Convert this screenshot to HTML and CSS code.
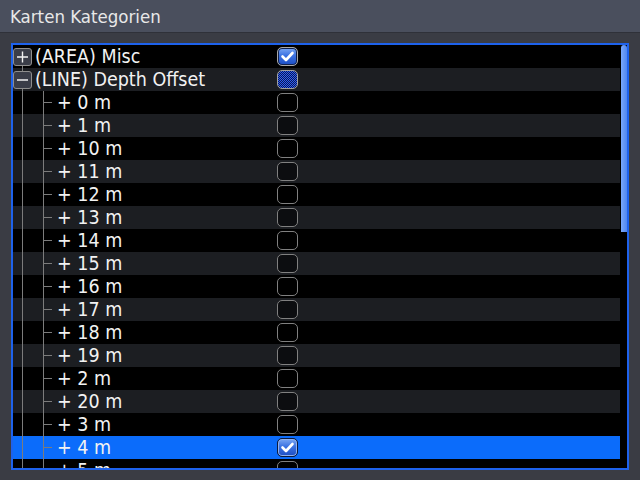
FILE: index.html
```html
<!DOCTYPE html>
<html lang="de">
<head>
    <meta charset="UTF-8">
    <title>Karten Kategorien</title>
    <link rel="stylesheet" href="styles.css">
</head>
<body>
    <div class="titlebar">Karten Kategorien</div>

    <div class="content">
        <div class="panel">
            <div class="list">
                <div class="row">
                    <div class="item">
                        <span class="tree tree-first">
                            <span class="expander">
                                <svg width="19" height="18" viewBox="0 0 19 18"><path d="M4 9h11M9.5 3.5v11" stroke="#f2f2f2" stroke-width="1.4" fill="none"/></svg>
                            </span>
                        </span>
                        <span class="name">(AREA) Misc</span>
                    </div>
                    <span class="check checked">
                        <svg width="19" height="17" viewBox="0 0 19 17"><path d="M4.5 8.5l3.5 3.5 6.5-7" stroke="#fff" stroke-width="2.6" fill="none" stroke-linecap="round" stroke-linejoin="round"/></svg>
                    </span>
                </div>
                <div class="row">
                    <div class="item">
                        <span class="tree tree-top">
                            <span class="expander">
                                <svg width="19" height="18" viewBox="0 0 19 18"><path d="M4 9h11" stroke="#f2f2f2" stroke-width="1.4" fill="none"/></svg>
                            </span>
                        </span>
                        <span class="name">(LINE) Depth Offset</span>
                    </div>
                    <span class="check partial"></span>
                </div>
                <div class="row"><div class="item"><span class="tree tree-child"></span><span class="name">+ 0 m</span></div><span class="check"></span></div>
                <div class="row"><div class="item"><span class="tree tree-child"></span><span class="name">+ 1 m</span></div><span class="check"></span></div>
                <div class="row"><div class="item"><span class="tree tree-child"></span><span class="name">+ 10 m</span></div><span class="check"></span></div>
                <div class="row"><div class="item"><span class="tree tree-child"></span><span class="name">+ 11 m</span></div><span class="check"></span></div>
                <div class="row"><div class="item"><span class="tree tree-child"></span><span class="name">+ 12 m</span></div><span class="check"></span></div>
                <div class="row"><div class="item"><span class="tree tree-child"></span><span class="name">+ 13 m</span></div><span class="check"></span></div>
                <div class="row"><div class="item"><span class="tree tree-child"></span><span class="name">+ 14 m</span></div><span class="check"></span></div>
                <div class="row"><div class="item"><span class="tree tree-child"></span><span class="name">+ 15 m</span></div><span class="check"></span></div>
                <div class="row"><div class="item"><span class="tree tree-child"></span><span class="name">+ 16 m</span></div><span class="check"></span></div>
                <div class="row"><div class="item"><span class="tree tree-child"></span><span class="name">+ 17 m</span></div><span class="check"></span></div>
                <div class="row"><div class="item"><span class="tree tree-child"></span><span class="name">+ 18 m</span></div><span class="check"></span></div>
                <div class="row"><div class="item"><span class="tree tree-child"></span><span class="name">+ 19 m</span></div><span class="check"></span></div>
                <div class="row"><div class="item"><span class="tree tree-child"></span><span class="name">+ 2 m</span></div><span class="check"></span></div>
                <div class="row"><div class="item"><span class="tree tree-child"></span><span class="name">+ 20 m</span></div><span class="check"></span></div>
                <div class="row"><div class="item"><span class="tree tree-child"></span><span class="name">+ 3 m</span></div><span class="check"></span></div>
                <div class="row selected">
                    <div class="item"><span class="tree tree-child"></span><span class="name">+ 4 m</span></div>
                    <span class="check checked">
                        <svg width="19" height="17" viewBox="0 0 19 17"><path d="M4.5 8.5l3.5 3.5 6.5-7" stroke="#fff" stroke-width="2.6" fill="none" stroke-linecap="round" stroke-linejoin="round"/></svg>
                    </span>
                </div>
                <div class="row"><div class="item"><span class="tree tree-child"></span><span class="name">+ 5 m</span></div><span class="check"></span></div>
            </div>
            <div class="scrollbar">
                <div class="thumb"></div>
            </div>
        </div>
    </div>
</body>
</html>
```

FILE: styles.css
```css
:root {
    --title-bg: #4a4f5d;
    --page-bg: #3a3c44;
    --border-blue: #1e62ec;
    --select-blue: #0b6cfb;
    --stripe: #1c1e22;
    --text-color: #f2f2f2;
    --line-color: #7c7c7c;
}

body {
    margin: 0;
    background-color: var(--page-bg);
    font-family: 'DejaVu Sans Condensed', 'DejaVu Sans', sans-serif;
    color: var(--text-color);
    width: 640px;
    height: 480px;
    overflow: hidden;
}

.titlebar {
    height: 32px;
    line-height: 33px;
    padding-left: 10px;
    font-size: 18.5px;
    color: #e8e8e8;
    background-color: var(--title-bg);
    border-bottom: 1px solid #2f3139;
}

.content {
    padding: 10px 11px 0 11px;
}

.panel {
    display: flex;
    height: 423px;
    border: 2px solid var(--border-blue);
    background-color: #000;
    overflow: hidden;
}

.list {
    flex: 1;
    overflow: hidden;
}

.row {
    display: grid;
    grid-template-columns: 264px 21px;
    align-items: center;
    height: 23px;
}

.row:nth-child(even) {
    background-color: var(--stripe);
}

.row.selected {
    background-color: var(--select-blue);
}

.item {
    display: flex;
    align-items: center;
    height: 23px;
}

.name {
    font-size: 19.5px;
    line-height: 23px;
    white-space: nowrap;
}

.tree {
    display: flex;
    align-items: center;
    height: 23px;
    flex: none;
}

.tree-top,
.tree-first {
    width: 22px;
    background: linear-gradient(var(--line-color), var(--line-color)) no-repeat 9px 0 / 1px 100%;
}

.tree-first {
    background-position: 9px 11px;
}

.tree-child {
    width: 44px;
    background:
        linear-gradient(var(--line-color), var(--line-color)) no-repeat 9px 0 / 1px 100%,
        linear-gradient(var(--line-color), var(--line-color)) no-repeat 30px 0 / 1px 100%,
        linear-gradient(var(--line-color), var(--line-color)) no-repeat 30px 11px / 9px 1px;
}

.expander {
    display: block;
    width: 17px;
    height: 16px;
    border: 1px solid #8e8e8e;
    border-radius: 3px;
    background-color: #3a3d48;
    overflow: hidden;
}

.expander svg {
    display: block;
    margin: -1px 0 0 -1px;
}

.check {
    display: block;
    box-sizing: border-box;
    width: 21px;
    height: 19px;
    border: 1px solid #808080;
    border-radius: 5px;
    background-color: #000;
}

.row:nth-child(even) .check {
    background-color: #0c0d10;
}

.check.checked {
    border-color: #a9a9a9;
    background: linear-gradient(#7aa6f2, #3c72e2 45%, #1b4dc4);
    box-shadow: inset 0 0 0 1px #10204a;
}

.row.selected .check.checked {
    border-color: #0b1a3e;
    box-shadow: inset 0 0 0 1px #8fb0ee;
}

.check.checked svg {
    display: block;
}

.check.partial {
    border-color: #a0a0a0;
    background-color: #0a1a55;
    background-image: conic-gradient(#2f5cf0 25%, #0a1a55 0 50%, #2f5cf0 0 75%, #0a1a55 0);
    background-size: 2px 2px;
}

.scrollbar {
    width: 7px;
    flex: none;
}

.thumb {
    width: 6px;
    margin-left: 1px;
    height: 187px;
    border-radius: 3px 3px 0 0;
    background: linear-gradient(90deg, #7aa8fa, #4f86f0);
}
```
